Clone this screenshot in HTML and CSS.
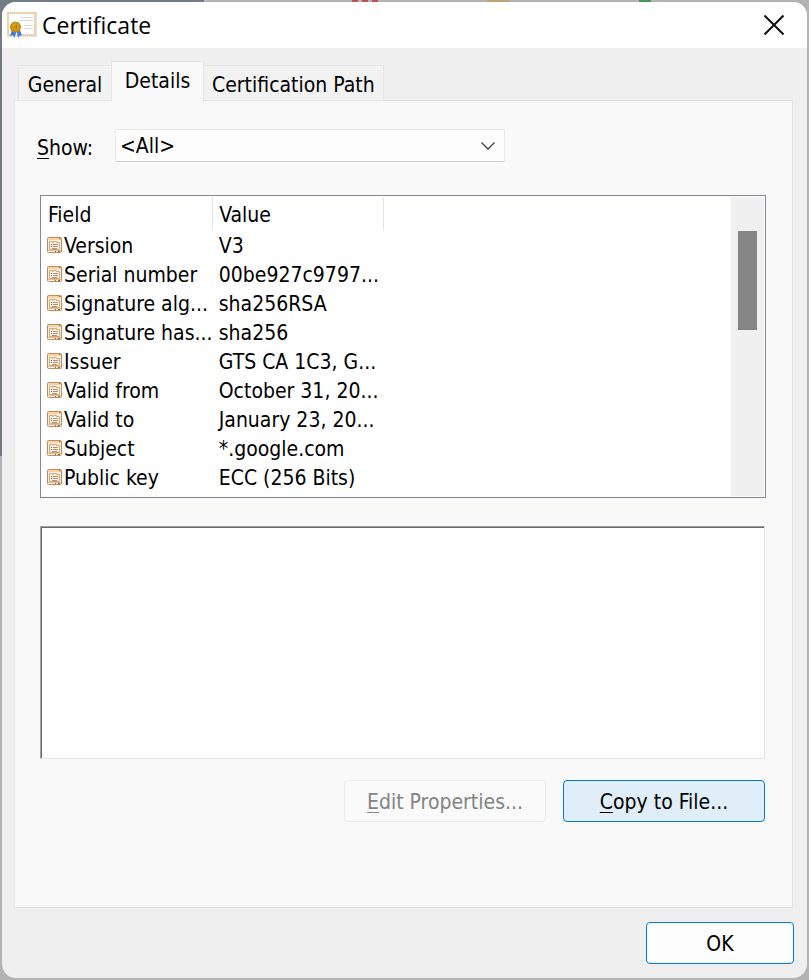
FILE: index.html
```
<!DOCTYPE html>
<html lang="en">
<head>
<meta charset="utf-8">
<meta name="viewport" content="width=device-width, initial-scale=1">
<title>Certificate</title>
<link rel="stylesheet" href="styles.css">
</head>
<body>
<svg class="symbols" aria-hidden="true">
  <symbol id="field-icon" viewBox="0 0 15 16">
    <rect x=".5" y=".5" width="14" height="15" rx="1" fill="#fff0dc" stroke="#b98d62"/>
    <path d="M1 2h13" stroke="#ffd0a0" stroke-width="2"/>
    <path d="M12 1.500h1.500M8 14.500h1M11 14.500h2" stroke="#8c6440"/>
    <path d="M1 13.500h13" stroke="#e0ba91"/>
    <path d="M2.500 4.500h3v1h1v-1h3v1h3v7h-10z" fill="#fff8ee" stroke="#d5a576"/>
    <path d="M4 7.500h1M4 9.500h1" stroke="#765844"/>
    <path d="M6 7.500h5M6 9.500h5M5 11.500h5" stroke="#b98d6a"/>
  </symbol>
</svg>
<main class="dialog">
  <header class="titlebar">
    <svg class="cert-icon" viewBox="0 0 32 28" aria-hidden="true">
      <rect x="1" y="1" width="30" height="25" fill="#e4e2df"/>
      <rect x="2" y="2" width="27" height="22" fill="#fff" stroke="#f3dcbb" stroke-width="2"/>
      <rect x="2" y="2" width="27" height="22" fill="none" stroke="#e2b988" stroke-dasharray="1 1"/>
      <path d="M14 6.500h13M14 9.500h13M18 14.500h9M18 17.500h8" stroke="#d8dade"/>
      <path d="M6 19l-2 6 3-1 1 3 3-7zM11 20l1 7 2-3 2 1-2-6z" fill="#3478ec"/>
      <circle cx="9.500" cy="16" r="5.500" fill="#c88b05"/>
      <circle cx="9.500" cy="15.500" r="3.500" fill="#d9a31c"/>
      <path d="M7 17l4-3-1 4" fill="none" stroke="#a06d00"/>
    </svg>
    <h1 class="title">Certificate</h1>
    <button class="close" type="button" aria-label="Close">
      <svg viewBox="0 0 20 20" aria-hidden="true"><path d="M.5.5l19 19M19.500.5l-19 19" stroke="#111" stroke-width="2"/></svg>
    </button>
  </header>
  <div class="content">
    <div class="tabs" role="tablist">
      <button class="tab" type="button" role="tab" aria-selected="false">General</button>
      <button class="tab active" type="button" role="tab" aria-selected="true">Details</button>
      <button class="tab" type="button" role="tab" aria-selected="false">Certification Path</button>
    </div>
    <section class="panel">
      <div class="filter">
        <label for="show"><u>S</u>how:</label>
        <div class="select-wrap">
          <select id="show"><option>&lt;All&gt;</option></select>
          <svg class="chevron" viewBox="0 0 14 8" aria-hidden="true"><path d="M.5.5L7 7 13.500.5" fill="none" stroke="#444" stroke-width="1.300"/></svg>
        </div>
      </div>
      <div class="list">
        <table>
          <thead><tr><th>Field</th><th>Value</th></tr></thead>
          <tbody>
            <tr><td><svg><use href="#field-icon"/></svg>Version</td><td>V3</td></tr>
            <tr><td><svg><use href="#field-icon"/></svg>Serial number</td><td>00be927c9797...</td></tr>
            <tr><td><svg><use href="#field-icon"/></svg>Signature alg...</td><td>sha256RSA</td></tr>
            <tr><td><svg><use href="#field-icon"/></svg>Signature has...</td><td>sha256</td></tr>
            <tr><td><svg><use href="#field-icon"/></svg>Issuer</td><td>GTS CA 1C3, G...</td></tr>
            <tr><td><svg><use href="#field-icon"/></svg>Valid from</td><td>October 31, 20...</td></tr>
            <tr><td><svg><use href="#field-icon"/></svg>Valid to</td><td>January 23, 20...</td></tr>
            <tr><td><svg><use href="#field-icon"/></svg>Subject</td><td>*.google.com</td></tr>
            <tr><td><svg><use href="#field-icon"/></svg>Public key</td><td>ECC (256 Bits)</td></tr>
          </tbody>
        </table>
        <div class="scrollbar"><div class="thumb"></div></div>
      </div>
      <textarea class="detail" aria-label="Field value" readonly></textarea>
      <div class="actions">
        <button class="button wide" type="button" disabled><u>E</u>dit Properties...</button>
        <button class="button wide hot" type="button"><u>C</u>opy to File...</button>
      </div>
    </section>
  </div>
  <footer class="footer"><button class="button default" type="button">OK</button></footer>
</main>
</body>
</html>
```
FILE: styles.css
```
* { box-sizing: border-box; }
body {
  margin: 0;
  min-height: 100vh;
  display: flex;
  padding: 2px;
  font: 21px/28px "DejaVu Sans Condensed", "Noto Sans", sans-serif;
  color: #000;
  background:
    linear-gradient(#b85450, #b85450) 352px 0 / 6px 2px no-repeat,
    linear-gradient(#b85450, #b85450) 362px 0 / 6px 2px no-repeat,
    linear-gradient(#b85450, #b85450) 372px 0 / 6px 2px no-repeat,
    linear-gradient(#b9a778, #b9a778) 487px 0 / 22px 2px no-repeat,
    linear-gradient(#4c965c, #4c965c) 639px 0 / 12px 2px no-repeat,
    linear-gradient(#747b82, #747b82) 0 0 / 204px 20px no-repeat,
    linear-gradient(#747b82, #747b82) 0 0 / 2px 456px no-repeat,
    #b3b3b3;
}
button, select, textarea { font: inherit; color: inherit; }
button { padding: 0; }
u { text-underline-offset: 3px; text-decoration-thickness: 1px; }
.symbols { position: absolute; width: 0; height: 0; }
.dialog {
  flex: 1;
  min-width: 0;
  display: flex;
  flex-direction: column;
  background: #efefef;
  border-radius: 14px;
  overflow: hidden;
}
.titlebar {
  display: flex;
  align-items: center;
  height: 46px;
  padding: 0 20px 0 4px;
  background: #fff;
}
.cert-icon { width: 32px; height: 28px; }
.title {
  flex: 1;
  margin: 0 0 0 4px;
  font: 23px/30px "Open Sans", "Noto Sans", sans-serif;
}
.close {
  display: flex;
  align-items: center;
  justify-content: center;
  width: 26px;
  height: 32px;
  border: 0;
  background: none;
}
.close svg { width: 20px; height: 20px; }
.content {
  flex: 1;
  display: flex;
  flex-direction: column;
  padding: 13px 14px 0 12px;
}
.tabs {
  display: flex;
  align-items: flex-end;
  padding-left: 4px;
  margin-bottom: -1px;
}
.tab {
  min-width: 93px;
  height: 36px;
  padding: 3px 8px 0;
  border: 1px solid #e5e5e5;
  border-right: 0;
  background: #f2f2f2;
}
.tab:last-child { border-right: 1px solid #e5e5e5; border-left: 0; }
.tab.active {
  position: relative;
  height: 40px;
  padding: 0 8px 2px;
  border-right: 1px solid #e5e5e5;
  border-bottom: 0;
  background: #f9f9f9;
}
.panel {
  flex: 1;
  padding: 28px 26px 32px 25px;
  border: 1px solid #e5e5e5;
  background: #f9f9f9;
}
.filter {
  display: flex;
  align-items: center;
  margin-left: -3px;
}
.filter label { width: 78px; padding-top: 5px; }
.select-wrap {
  display: flex;
  align-items: center;
  width: 390px;
}
select {
  appearance: none;
  width: 100%;
  height: 33px;
  padding: 1px 32px 0 4px;
  border: 1px solid #e8e8e8;
  border-bottom-color: #cfcfcf;
  border-radius: 2px;
  background: #fdfdfd;
}
.chevron { flex: none; width: 14px; height: 8px; margin-left: -24px; pointer-events: none; }
.list {
  display: flex;
  justify-content: space-between;
  height: 303px;
  margin-top: 33px;
  padding: 1px;
  border: 1px solid #828790;
  background: #fff;
}
table { border-collapse: collapse; table-layout: fixed; width: 342px; height: max-content; }
th, td {
  height: 29px;
  padding: 0 0 0 5px;
  font-weight: normal;
  text-align: left;
  white-space: nowrap;
}
th { height: 34px; padding: 1px 0 0 6px; border-right: 1px solid #e5e5e5; }
td + td { padding-left: 6px; }
td svg { width: 15px; height: 16px; margin-right: 2px; vertical-align: 0; }
.scrollbar { width: 33px; padding: 34px 7px 0; background: #f0f0f0; }
.thumb { height: 99px; background: #858585; }
.detail {
  display: block;
  width: calc(100% - 1px);
  height: 233px;
  margin-top: 28px;
  border: 1px solid #e3e3e3;
  border-top-color: #a0a0a0;
  border-left-color: #a0a0a0;
  box-shadow: inset 1px 1px #696969;
  background: #fff;
  resize: none;
  outline: 0;
}
.actions { display: flex; justify-content: flex-end; gap: 17px; margin: 21px 1px 0 0; }
.button {
  width: 148px;
  height: 42px;
  padding-top: 2px;
  border: 1px solid #0078d4;
  border-radius: 4px;
  background: #fdfdfd;
}
.button.wide { width: 202px; }
.button:disabled { border-color: #ebebeb; background: #fafafa; color: #838383; }
.button.hot { background: #e0eef9; }
.footer { display: flex; justify-content: flex-end; padding: 14px 13px; }
```
